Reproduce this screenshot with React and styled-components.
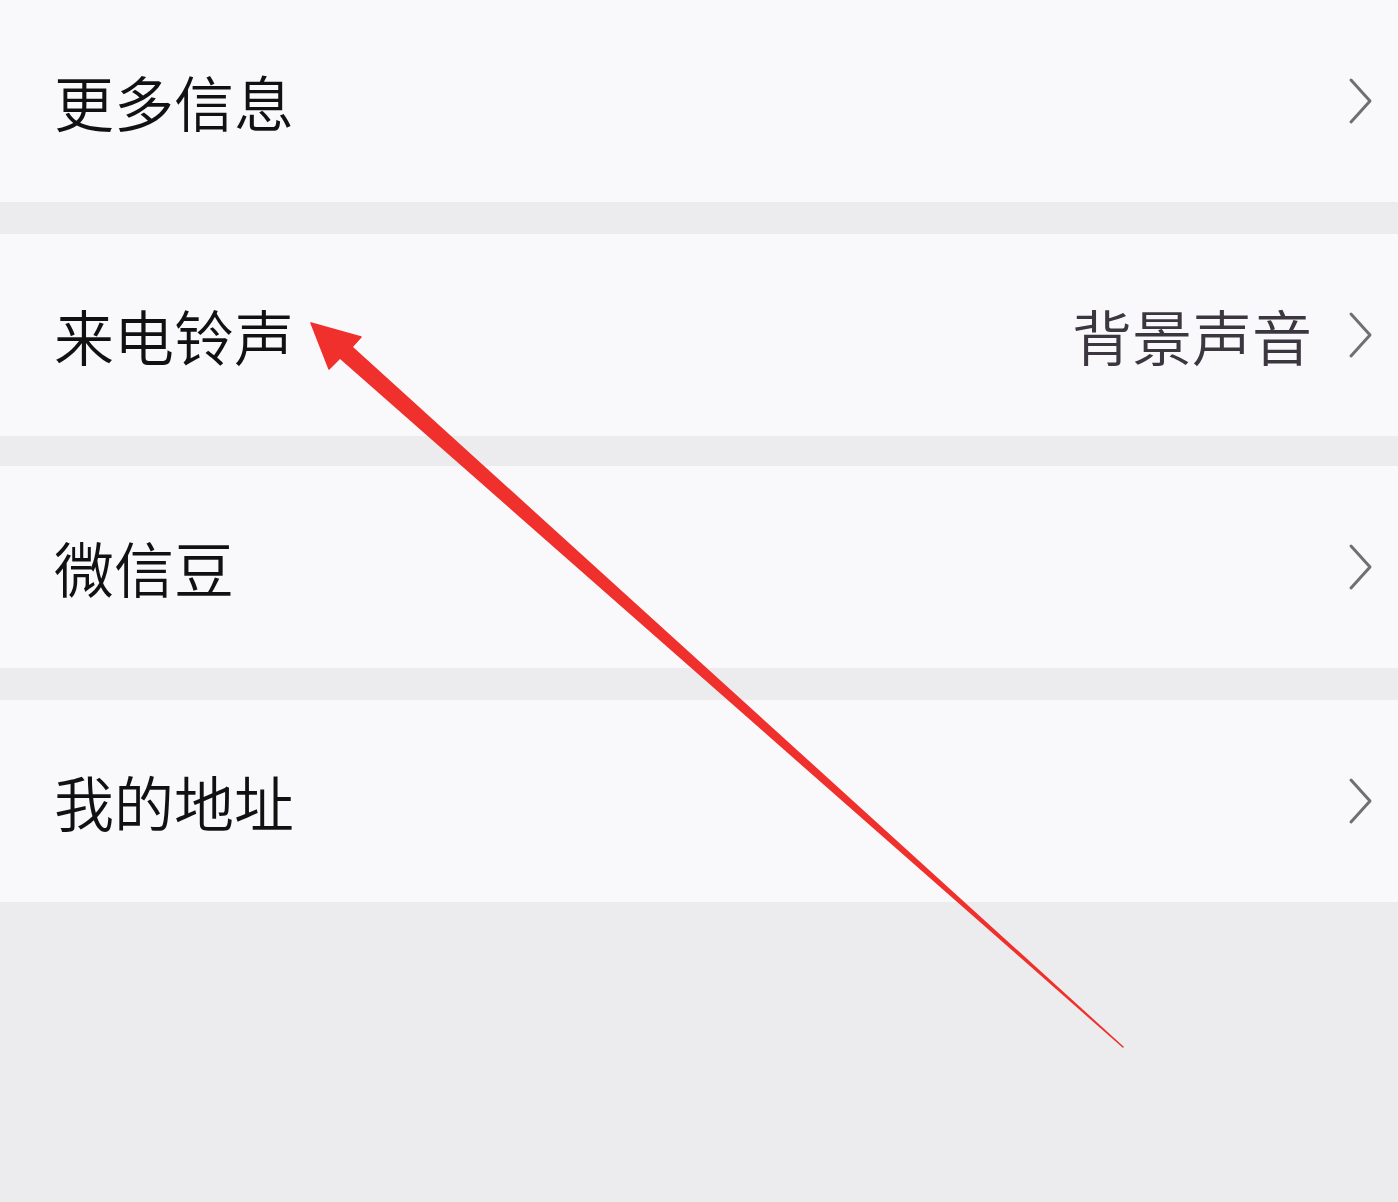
import React from 'react';
import styled, { createGlobalStyle } from 'styled-components';

const GlobalStyle = createGlobalStyle`
  html, body {
    margin: 0;
    padding: 0;
    background: #ececee;
  }
  body {
    font-family: 'Noto Sans CJK SC', 'Noto Sans', sans-serif;
  }
`;

const Page = styled.div`
  position: relative;
  width: 1398px;
  height: 1202px;
  overflow: hidden;
  background: #ececee;
  display: flex;
  flex-direction: column;
`;

const Row = styled.div`
  height: 202px;
  margin-top: ${(props) => props.gap}px;
  background: #f9f9fb;
  display: flex;
  align-items: center;
  padding: 0 24px 0 54px;
  box-sizing: border-box;
`;

const Label = styled.span`
  flex: 1;
  font-size: 60px;
  font-weight: 350;
  line-height: 1;
  color: #111;
`;

const Value = styled.span`
  font-size: 60px;
  font-weight: 350;
  line-height: 1;
  color: #3c3640;
  margin-right: 36px;
`;

const Chevron = () => (
  <svg width="26" height="48" viewBox="0 0 26 48">
    <polyline
      points="3,3 22,24 3,45"
      fill="none"
      stroke="#707070"
      strokeWidth="3"
      strokeLinecap="round"
      strokeLinejoin="round"
    />
  </svg>
);

const Overlay = styled.svg`
  position: absolute;
  left: 0;
  top: 0;
  pointer-events: none;
`;

const items = [
  { label: '更多信息', gap: 0 },
  { label: '来电铃声', value: '背景声音', gap: 32 },
  { label: '微信豆', gap: 30 },
  { label: '我的地址', gap: 32 },
];

export default function App() {
  return (
    <>
      <GlobalStyle />
      <Page>
        {items.map((item) => (
          <Row key={item.label} gap={item.gap}>
            <Label>{item.label}</Label>
            {item.value && <Value>{item.value}</Value>}
            <Chevron />
          </Row>
        ))}
        <Overlay width="1398" height="1202" viewBox="0 0 1398 1202">
          <polygon
            points="311,323 361,337 352,347 1123,1047 340,358 329,369"
            fill="#f0302c"
            stroke="#f0302c"
            strokeWidth="1.5"
            strokeLinejoin="round"
          />
        </Overlay>
      </Page>
    </>
  );
}
